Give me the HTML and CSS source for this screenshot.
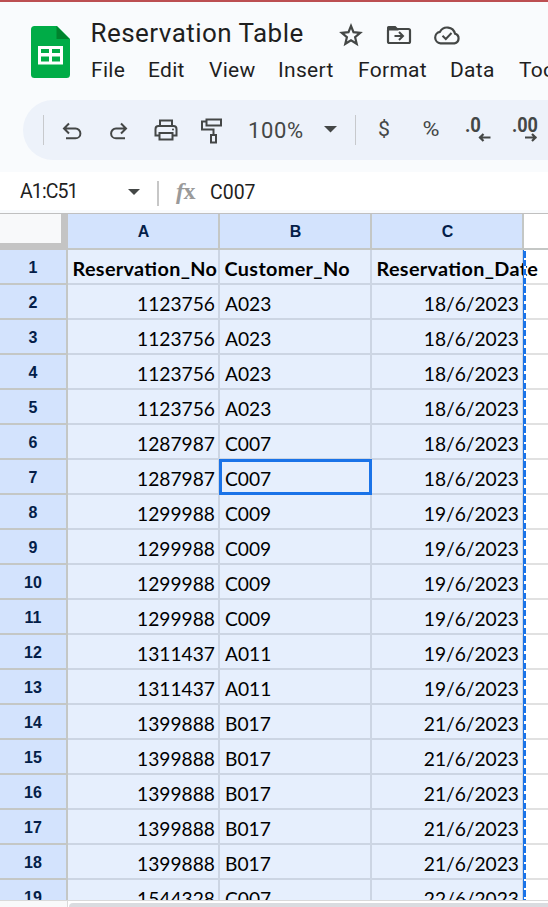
FILE: index.html
```html
<!DOCTYPE html>
<html lang="en">
<head>
<meta charset="utf-8">
<title>Reservation Table</title>
<link rel="stylesheet" href="styles.css">
</head>
<body>
<div class="app">
  <header class="top">
    <svg class="logo" viewBox="0 0 39 52"><path fill="#00ac47" d="M3.500 0H26L39 13V48.500Q39 52 35.500 52H3.500Q0 52 0 48.500V3.500Q0 0 3.500 0Z"/><path fill="#00832d" d="M25.500 0L38.500 13H25.500Z"/><path fill="#fff" fill-rule="evenodd" d="M7 20H32V38.500H7ZM10 23V27H18V23ZM21 23V27H29V23ZM10 30.500V35.500H18V30.500ZM21 30.500V35.500H29V30.500Z"/></svg>
    <div class="heading">
      <div class="title-row">
        <span class="title">Reservation Table</span>
        <svg class="star" viewBox="0 0 24 24"><path fill="none" stroke="#444746" stroke-width="2.200" d="M12 3L14.500 9.200 21.200 9.800 16.100 14.200 17.700 20.800 12 17.300 6.300 20.800 7.900 14.200 2.800 9.800 9.500 9.200Z"/></svg>
        <svg class="folder" viewBox="0 0 26 20"><path fill="none" stroke="#444746" stroke-width="2.200" stroke-linejoin="round" d="M2 5V16.500Q2 18 3.500 18H22.500Q24 18 24 16.500V5.500Q24 4 22.500 4H11"/><path fill="#444746" d="M1 6V2.500Q1 1 2.500 1H9.500L12.500 4V5.500H1Z"/><path fill="none" stroke="#444746" stroke-width="2" d="M8.500 11H16.500M13 7L17 11L13 15"/></svg>
        <svg class="cloud" viewBox="0 0 28 20"><path fill="none" stroke="#444746" stroke-width="2.200" d="M7.500 18.300H21.500A5 5 0 0 0 22 8.600A8.100 8.100 0 0 0 7 6.800A5.800 5.800 0 0 0 7.500 18.300Z"/><path fill="none" stroke="#444746" stroke-width="2" d="M9.500 10.800L12.800 14L18.500 8"/></svg>
      </div>
      <nav class="menu"><span class="m1">File</span><span class="m2">Edit</span><span class="m3">View</span><span class="m4">Insert</span><span class="m5">Format</span><span class="m6">Data</span><span class="m7">Tools</span></nav>
    </div>
  </header>
  <div class="toolbar">
    <svg viewBox="0 0 525 60" width="525" height="60">
      <path stroke="#c7c9cc" d="M20.500 15V45M332.500 15V45"/>
      <g fill="none" stroke="#444746" stroke-width="2">
        <path d="M46 23.500L41 28.500L46 33.500M41.500 28.500H52.500A4.900 4.900 0 0 1 52.500 38.300H43"/>
        <path d="M98 23.500L103 28.500L98 33.500M102.500 28.500H93A4.900 4.900 0 0 0 93 38.300H102"/>
        <path d="M137 26V20.500H149V26M136 35.500H132.500V29Q132.500 26 135.500 26H150.500Q153.500 26 153.500 29V35.500H150M136.500 33H149.500V39.500H136.500Z"/>
        <path d="M183.500 19.500H198V25.500H183.500ZM183.500 21.500H179V29.500H190.500V35M188 35H193V42.500H188Z"/>
        <path stroke-width="2.200" d="M467.500 37.500H456M460.500 34L457 37.500L460.500 41M502 37.500H513.500M509 34L512.500 37.500L509 41"/>
      </g>
      <circle cx="150" cy="29.500" r="1" fill="#444746"/>
      <path fill="#444746" d="M301 26H314L307.500 32.500Z"/>
      <g fill="#444746">
        <text class="t-zoom" x="225" y="38" textLength="55">100%</text>
        <text class="t-sym" x="355" y="35.500" textLength="12" lengthAdjust="spacingAndGlyphs">$</text>
        <text class="t-sym" x="399.500" y="35.500" textLength="17" lengthAdjust="spacingAndGlyphs">%</text>
        <text class="t-dec" x="442" y="31.500" textLength="16" lengthAdjust="spacingAndGlyphs">.0</text>
        <text class="t-dec" x="489" y="31.500" textLength="26" lengthAdjust="spacingAndGlyphs">.00</text>
      </g>
    </svg>
  </div>
  <div class="formula">
    <span class="range">A1:C51</span>
    <span class="caret"></span>
    <span class="split"></span>
    <span class="fx"><i>f</i>x</span>
    <span class="value">C007</span>
  </div>
  <main class="sheet">
    <div class="grid" id="grid">
      <div class="corner"></div><div class="col">A</div><div class="col">B</div><div class="col">C</div><div class="col blank"></div>
    </div>
    <div class="marquee"></div>
  </main>
  <footer class="scroll"><div class="gutter"></div><div class="track"></div></footer>
</div>
<script src="sheet.js"></script>
</body>
</html>
```
FILE: styles.css
```css
* { box-sizing: border-box; }
body { margin: 0; background: #fff; }
.app { width: 548px; height: 907px; overflow: hidden; display: flex; flex-direction: column; background: #f9fbfd; border-top: 2px solid #bc4f52; font-family: Roboto, sans-serif; }
.top { height: 98px; flex: none; display: flex; padding-left: 31px; }
.logo { width: 39px; height: 52px; margin-top: 24px; flex: none; }
.heading { margin-left: 21px; padding-top: 12px; flex: none; }
.title-row { display: flex; align-items: center; height: 38px; }
.title { width: 248px; margin-left: -.5px; margin-right: .5px; font-size: 26px; color: #1f1f1f; letter-spacing: .45px; white-space: nowrap; }
.star { width: 24px; height: 24px; margin-top: 4px; }
.folder { width: 26px; height: 20px; margin: 4px 0 0 23px; }
.cloud { width: 28px; height: 20px; margin: 4px 0 0 21px; }
.menu { display: flex; height: 34px; line-height: 36px; font-size: 21px; color: #1f1f1f; letter-spacing: .3px; white-space: nowrap; }
.menu span { flex: none; }
.m1 { width: 57px; } .m2 { width: 61px; } .m3 { width: 69px; } .m4 { width: 80px; } .m5 { width: 92px; } .m6 { width: 69px; }
.toolbar { height: 60px; flex: none; margin-left: 23px; background: #edf2fa; border-radius: 30px 0 0 30px; }
.toolbar svg { display: block; }
.t-zoom { font-size: 22px; }
.t-sym { font-size: 20px; }
.t-dec { font-size: 20px; font-weight: 700; }
.formula { height: 38px; flex: none; margin-top: 12px; display: flex; align-items: center; background: #fff; padding-left: 20px; font-size: 19.500px; color: #1f1f1f; white-space: nowrap; }
.range { width: 108px; letter-spacing: -.9px; padding-top: 1px; }
.caret { border: 6px solid transparent; border-top-color: #444746; border-bottom: 0; margin-top: 2px; }
.split { width: 2px; height: 25px; background: #c7c7c7; margin: 4px 0 0 17px; }
.fx { width: 34px; margin-left: 17px; font: bold 24px "Liberation Serif", serif; letter-spacing: -.5px; color: #9a9a9a; }
.value { padding-top: 2px; }
.sheet { height: 687px; flex: none; overflow: hidden; position: relative; background: #fff; border-top: 1px solid #c0c0c0; margin-top: 3px; }
.grid { display: grid; grid-template-columns: 68px 152px 152px 152px 24px; grid-template-rows: 36px; grid-auto-rows: 35px; }
.corner { background: #f8f9fa; border-right: 7px solid #c4c4c4; border-bottom: 7px solid #c4c4c4; }
.col, .num { background: #d3e3fd; border-right: 2px solid #c4c7c5; border-bottom: 2px solid #c4c7c5; display: flex; align-items: center; justify-content: center; font: bold 16px "Liberation Sans", sans-serif; color: #041e49; padding-top: 2px; }
.col { padding-left: 1px; }
.blank { background: #fff; border-right: 0; }
.cell { background: #e6effd; border-right: 2px solid #ccd5e3; border-bottom: 2px solid #ccd5e3; font: 19.200px/38px Lato, sans-serif; color: #000; padding: 0 3px 0 5px; white-space: nowrap; font-variant-numeric: tabular-nums; }
.right { text-align: right; }
.head { font-weight: 700; font-size: 19.800px; line-height: 36px; padding-left: 4.500px; letter-spacing: .36px; font-feature-settings: "liga" 1; }
.h2 { position: relative; }
.void { background: #fff; border-bottom: 2px solid #e1e1e1; }
.active { position: relative; }
.active::after { content: ""; position: absolute; inset: -1px -2px -2px -1px; border: 3px solid #1a73e8; }
.marquee { position: absolute; left: 523px; top: 36px; width: 3px; height: 660px; border-left: 1px solid #1a73e8; background: repeating-linear-gradient(#fff 0 1.500px, #1a73e8 1.500px 7.750px, #fff 7.750px 8.750px); }
.scroll { height: 7px; flex: none; display: flex; background: #fff; border-top: 1px solid #d9d9d9; }
.gutter { width: 68px; background: #f8f9fa; border-right: 1px solid #d9d9d9; }
.track { flex: 1; margin: 2px 0 0 1px; background: #dadce0; border-radius: 7px 0 0 0; }
```
FILE: sheet.js
```js
const rows = [
  ['Reservation_No', 'Customer_No', 'Reservation_Date'],
  ...Array(4).fill(['1123756', 'A023', '18/6/2023']),
  ...Array(2).fill(['1287987', 'C007', '18/6/2023']),
  ...Array(4).fill(['1299988', 'C009', '19/6/2023']),
  ...Array(2).fill(['1311437', 'A011', '19/6/2023']),
  ...Array(5).fill(['1399888', 'B017', '21/6/2023']),
  ['1544328', 'C007', '22/6/2023']
];
const grid = document.getElementById('grid');
function add(cls, text) {
  const el = document.createElement('div');
  el.className = cls;
  el.textContent = text;
  grid.append(el);
}
rows.forEach((row, r) => {
  add('num', r + 1);
  row.forEach((text, c) => {
    let cls = 'cell';
    if (r === 0) cls += ' head h' + c;
    else if (c !== 1) cls += ' right';
    if (r === 6 && c === 1) cls += ' active';
    add(cls, text);
  });
  add('void', '');
});
```
